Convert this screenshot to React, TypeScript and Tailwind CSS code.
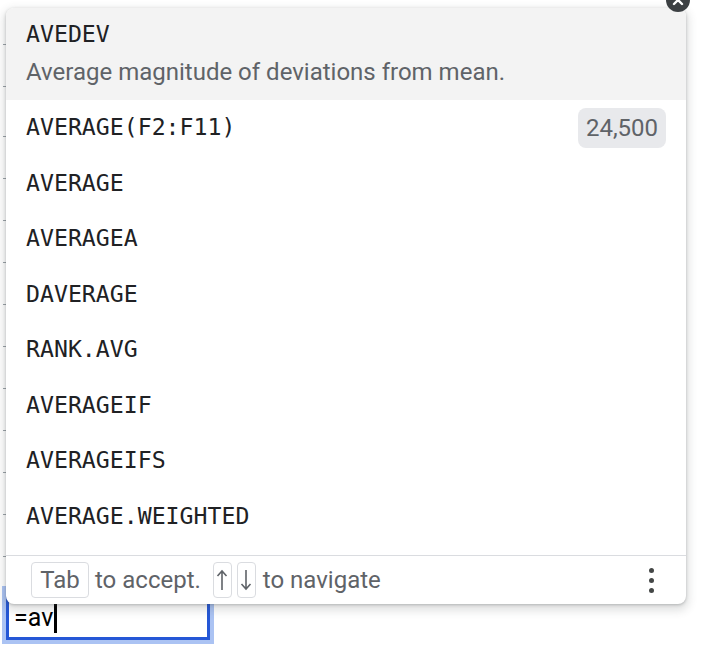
import React from 'react';

const suggestions = [
  'AVERAGE',
  'AVERAGEA',
  'DAVERAGE',
  'RANK.AVG',
  'AVERAGEIF',
  'AVERAGEIFS',
  'AVERAGE.WEIGHTED',
];

const mono = "font-['DejaVu_Sans_Mono',monospace]";
const sans = "font-['Roboto',sans-serif]";

const KeyCap: React.FC<{ children: React.ReactNode; className?: string }> = ({
  children,
  className = '',
}) => (
  <span
    className={`flex h-[36px] items-center justify-center rounded-[4px] border border-[#dadce0] text-[#5f6368] ${className}`}
  >
    {children}
  </span>
);

// thin arrow like the one used in the footer hint
const Arrow: React.FC<{ down?: boolean }> = ({ down }) => (
  <svg
    width="12"
    height="22"
    viewBox="0 0 12 22"
    className={down ? 'rotate-180' : ''}
  >
    <path
      d="M6 2 L6 21 M1.5 7 L6 2 L10.5 7"
      fill="none"
      stroke="#5f6368"
      strokeWidth="1.6"
    />
  </svg>
);

const FormulaPopup: React.FC = () => {
  return (
    <div className="absolute left-[6px] top-[8px] flex h-[596px] w-[680px] flex-col rounded-lg bg-white shadow-[0_1px_3px_rgba(60,64,67,0.3),0_4px_8px_3px_rgba(60,64,67,0.15)]">
      {/* close button sticks out over the top edge */}
      <button className="absolute left-[660px] top-[-20px] flex h-[24px] w-[24px] items-center justify-center rounded-full bg-[#3c4043]">
        <svg width="12" height="12" viewBox="0 0 12 12">
          <path
            d="M2 2 L10 10 M10 2 L2 10"
            stroke="white"
            strokeWidth="2.4"
            strokeLinecap="round"
          />
        </svg>
      </button>

      <div className="flex h-[92px] flex-col rounded-t-lg bg-[#f3f3f3] px-[20px] pt-[12px]">
        <div className={`${mono} text-[23.2px] leading-[28px] text-[#202124]`}>
          AVEDEV
        </div>
        <div
          className={`${sans} mt-[10px] text-[24px] leading-[28px] text-[#5f6368]`}
        >
          Average magnitude of deviations from mean.
        </div>
      </div>

      <div className="flex h-[55.5px] items-center justify-between pl-[20px] pr-[20px]">
        <span className={`${mono} text-[23.2px] text-[#202124]`}>
          AVERAGE(F2:F11)
        </span>
        <span
          className={`${sans} flex h-[40px] w-[88px] items-center justify-center rounded-[8px] bg-[#e8e9ec] text-[24px] text-[#5f6368]`}
        >
          24,500
        </span>
      </div>
      {suggestions.map((name) => (
        <div key={name} className="flex h-[55.5px] items-center px-[20px]">
          <span className={`${mono} text-[23.2px] text-[#202124]`}>{name}</span>
        </div>
      ))}

      <div className="mt-[11px] border-t border-[#dadce0]" />
      <div
        className={`${sans} flex h-[48px] items-center justify-between pl-[25px] pr-[32px] text-[24px] text-[#5f6368]`}
      >
        <div className="flex items-center">
          <KeyCap className="w-[58px]">Tab</KeyCap>
          <span className="ml-[6px]">to accept.</span>
          <KeyCap className="ml-[12px] w-[19px]">
            <Arrow />
          </KeyCap>
          <KeyCap className="ml-[5px] w-[19px]">
            <Arrow down />
          </KeyCap>
          <span className="ml-[7px]">to navigate</span>
        </div>
        <div className="flex flex-col gap-[5px]">
          <span className="h-[5px] w-[5px] rounded-full bg-[#444746]" />
          <span className="h-[5px] w-[5px] rounded-full bg-[#444746]" />
          <span className="h-[5px] w-[5px] rounded-full bg-[#444746]" />
        </div>
      </div>
    </div>
  );
};

const Tick: React.FC<{ className?: string }> = ({ className = '' }) => (
  <div className={`h-px w-[3px] bg-[#9aa0a6] ${className}`} />
);

export default function App() {
  return (
    <div className="relative h-[650px] w-[706px] overflow-hidden bg-white">
      {/* sheet underneath: row grid ticks at the left edge and the active cell */}
      <div className="flex h-full flex-col">
        <div className="flex flex-col pl-[3px] pt-[44px]">
          <Tick />
          <Tick className="mt-[41px]" />
          <div className="mt-[49px] flex flex-col gap-[41px]">
            {Array.from({ length: 11 }).map((_, i) => (
              <Tick key={i} />
            ))}
          </div>
        </div>

        <div className="mt-auto mb-[10.5px] ml-[6px] flex h-[50px] w-[204px] items-end border-[3.5px] border-[#2557d6] pb-[3px] pl-[5px] outline-[4px] outline-solid outline-[#abc3f3]">
          <span className={`${sans} text-[25px] leading-[32px] text-black`}>
            =av
          </span>
          <span className="mb-[1px] ml-[1px] h-[31px] w-[2.5px] bg-black" />
        </div>
      </div>

      <FormulaPopup />
    </div>
  );
}
